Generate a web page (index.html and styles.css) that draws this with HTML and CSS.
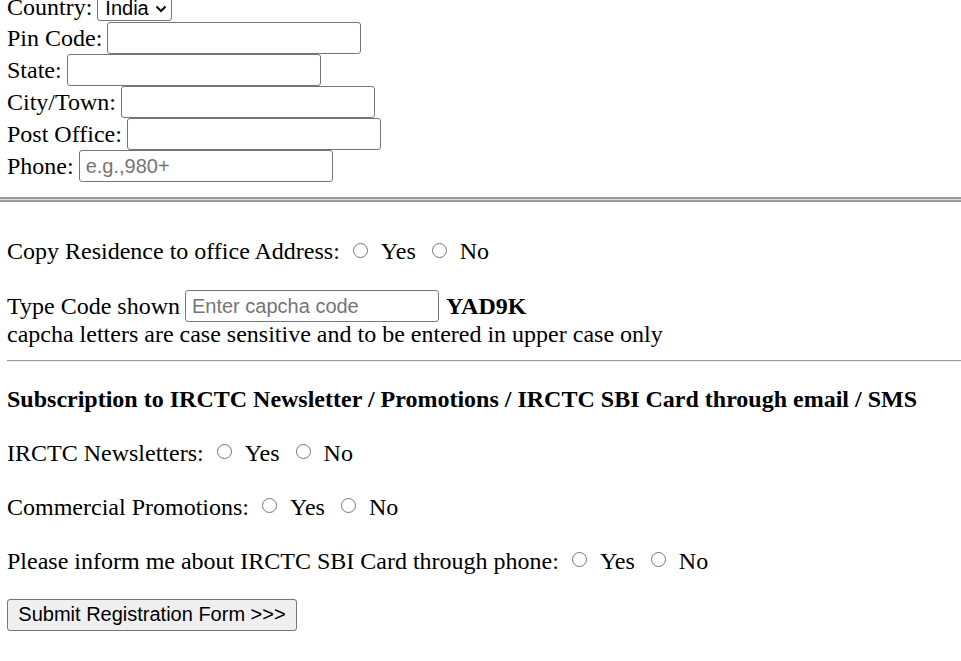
FILE: index.html
```html
<!DOCTYPE html>
<html>
<head>
<meta charset="utf-8">
<link rel="stylesheet" href="styles.css">
</head>
<body>
<form class="page">
  <div class="block">
    <div class="row row-country"><span class="lbl">Country:</span><span class="select">India</span></div>
    <div class="row"><span class="lbl">Pin Code:</span><input class="field" type="text"></div>
    <div class="row"><span class="lbl">State:</span><input class="field" type="text"></div>
    <div class="row"><span class="lbl">City/Town:</span><input class="field" type="text"></div>
    <div class="row"><span class="lbl">Post Office:</span><input class="field" type="text"></div>
    <div class="row"><span class="lbl">Phone:</span><input class="field" type="text" placeholder="e.g.,980+"></div>
  </div>
  <hr class="thick">
  <div class="block">
    <div class="row row-copy"><span class="lbl">Copy Residence to office Address:</span><span class="radio"></span><span class="opt">Yes</span><span class="radio"></span><span class="opt">No</span></div>
    <div class="row row-code"><span class="lbl">Type Code shown</span><input class="field" type="text" placeholder="Enter capcha code"><b class="code">YAD9K</b></div>
    <div class="note">capcha letters are case sensitive and to be entered in upper case only</div>
    <hr class="thin">
    <div class="line heading">Subscription to IRCTC Newsletter / Promotions / IRCTC SBI Card through email / SMS</div>
    <div class="line"><span class="lbl">IRCTC Newsletters:</span><span class="radio"></span><span class="opt">Yes</span><span class="radio"></span><span class="opt">No</span></div>
    <div class="line"><span class="lbl">Commercial Promotions:</span><span class="radio"></span><span class="opt">Yes</span><span class="radio"></span><span class="opt">No</span></div>
    <div class="line line-last"><span class="lbl">Please inform me about IRCTC SBI Card through phone:</span><span class="radio"></span><span class="opt">Yes</span><span class="radio"></span><span class="opt">No</span></div>
    <button class="submit" type="button">Submit Registration Form &gt;&gt;&gt;</button>
  </div>
</form>
</body>
</html>
```
FILE: styles.css
```css
html, body {
  margin: 0;
  padding: 0;
  background: #fff;
  overflow: hidden;
}
.page {
  font-family: "Liberation Serif", "Times New Roman", serif;
  font-size: 24px;
  color: #000;
  margin: 0;
}
.block {
  padding-left: 7px;
}
.row {
  display: flex;
  align-items: center;
  height: 32px;
  white-space: nowrap;
}
.row .lbl {
  line-height: 32px;
  margin-right: 5px;
}
.row-country {
  margin-top: -7px;
  height: 29px;
}
.row-country .lbl {
  line-height: 29px;
}
.select {
  box-sizing: border-box;
  display: flex;
  align-items: center;
  width: 75px;
  height: 25px;
  margin-top: 2px;
  padding: 0 0 0 7px;
  border: 1px solid #767676;
  border-radius: 3px;
  font-family: "Liberation Sans", Arial, sans-serif;
  font-size: 20px;
  background: #fff url("data:image/svg+xml;utf8,<svg xmlns='http://www.w3.org/2000/svg' width='12' height='8' viewBox='0 0 12 8'><path d='M1.5 1.5 L6 6 L10.5 1.5' fill='none' stroke='black' stroke-width='2'/></svg>") no-repeat right 4px center;
}
.field {
  box-sizing: border-box;
  width: 254px;
  height: 32px;
  margin: 0;
  padding: 1px 6px;
  border: 1px solid #767676;
  border-radius: 3px;
  font-family: "Liberation Sans", Arial, sans-serif;
  font-size: 20px;
  color: #000;
  background: #fff;
  outline: none;
}
.field::placeholder {
  color: #757575;
}
hr.thick {
  box-sizing: border-box;
  margin: 15px 0 0 0;
  height: 5px;
  border: 0;
  border-top: 2px solid #9a9a9a;
  border-bottom: 2px solid #9a9a9a;
  background: #dcdcdc;
}
.row-copy {
  margin-top: 33px;
}
.radio {
  box-sizing: border-box;
  display: inline-block;
  flex: none;
  width: 15px;
  height: 15px;
  border: 1px solid #767676;
  border-radius: 50%;
  background: #fff;
  margin: 0 13px 0 8px;
  position: relative;
  top: -1px;
}
.opt {
  margin-right: 8px;
}
.row-code {
  margin-top: 23px;
}
.row-code .field {
  margin-right: 7px;
}
.code {
  font-weight: bold;
}
.note {
  line-height: 24.5px;
  white-space: nowrap;
}
hr.thin {
  box-sizing: border-box;
  margin: 13px 0 0 0;
  height: 2px;
  border: 0;
  border-top: 1px solid #9a9a9a;
  border-bottom: 1px solid #eeeeee;
}
.line {
  display: flex;
  align-items: center;
  height: 24px;
  line-height: 24px;
  margin-bottom: 30px;
  white-space: nowrap;
}
.line .lbl {
  margin-right: 5px;
}
.heading {
  margin-top: 25px;
  font-weight: bold;
}
.line-last {
  margin-bottom: 26px;
}
.submit {
  box-sizing: border-box;
  display: block;
  width: 290px;
  height: 32px;
  margin: 0;
  padding: 0 10px;
  border: 1px solid #767676;
  border-radius: 3px;
  background: #efefef;
  font-family: "Liberation Sans", Arial, sans-serif;
  font-size: 20px;
  color: #000;
  white-space: nowrap;
}
```
